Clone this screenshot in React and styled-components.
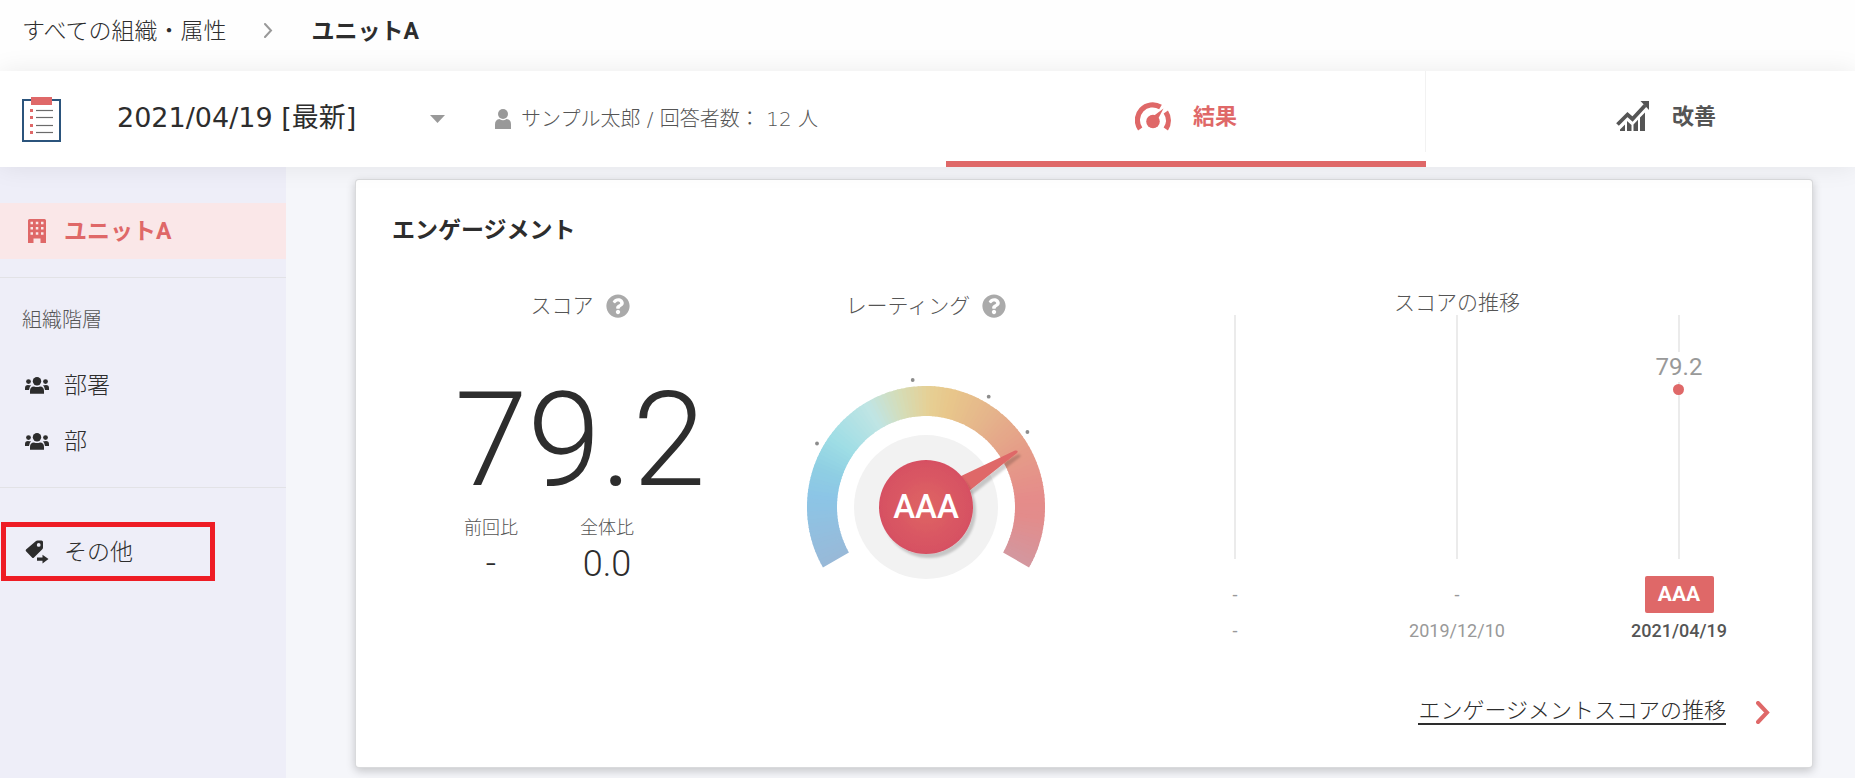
import styled, { createGlobalStyle } from 'styled-components'
import { FaQuestionCircle } from 'react-icons/fa'

const GlobalStyle = createGlobalStyle`
  * { box-sizing: border-box; }
  body {
    margin: 0;
    background: #f5f6fa;
    color: #2d2d2d;
    font-family: 'DejaVu Sans', 'Noto Sans CJK JP', sans-serif;
    font-weight: 300;
  }
  h2, h3, p, ul, ol, dl, dd { margin: 0; padding: 0; }
  ul, ol { list-style: none; }
  svg { display: block; flex-shrink: 0; }
`

const RED = '#df6868'

// stops run clockwise, in degrees from the top
const GAUGE_STOPS = [
  [-120, [152, 185, 216]],
  [-105, [147, 190, 222]],
  [-85, [140, 197, 230]],
  [-70, [143, 207, 227]],
  [-55, [158, 221, 229]],
  [-30, [192, 229, 228]],
  [-12, [215, 219, 178]],
  [2, [230, 207, 148]],
  [12, [232, 199, 139]],
  [35, [229, 180, 139]],
  [60, [229, 156, 136]],
  [85, [229, 140, 138]],
  [95, [227, 140, 139]],
  [120, [211, 151, 159]],
]

const gaugeColor = (deg) => {
  const next = Math.max(1, GAUGE_STOPS.findIndex(([d]) => d >= deg))
  const [d0, c0] = GAUGE_STOPS[next - 1]
  const [d1, c1] = GAUGE_STOPS[next]
  const t = (deg - d0) / (d1 - d0)
  return `rgb(${c0.map((c, i) => Math.round(c + (c1[i] - c) * t)).join(',')})`
}

// the ring is slightly taller than it is wide
const polar = (rx, ry, deg) => {
  const a = (deg * Math.PI) / 180
  return `${(Math.sin(a) * rx).toFixed(2)} ${(-Math.cos(a) * ry).toFixed(2)}`
}

const ringPart = (from, to) =>
  `M${polar(119, 121, from)}A119 121 0 0 1 ${polar(119, 121, to)}L${polar(89, 91, to)}A89 91 0 0 0 ${polar(89, 91, from)}Z`

const Gauge = ({ rating }) => {
  const parts = []
  for (let d = -120; d < 120; d += 2) parts.push(d)
  return (
    <svg width="242" height="206" viewBox="-121 -130 242 206" role="img" aria-label={rating}>
      <defs>
        <radialGradient id="knob">
          <stop offset="0" stopColor="#df6565" />
          <stop offset="1" stopColor="#d65062" />
        </radialGradient>
        <filter id="drop" x="-20%" y="-20%" width="150%" height="150%">
          <feDropShadow dx="3" dy="4" stdDeviation="1" floodColor="#000" floodOpacity="0.18" />
        </filter>
      </defs>
      {parts.map((d) => (
        <path key={d} d={ringPart(d, Math.min(120, d + 2.5))} fill={gaugeColor(d + 1)} />
      ))}
      <circle r="72" fill="#f2f2f2" />
      <g fill="#8c8c8c">
        <circle cx="-109" cy="-63.5" r="1.9" />
        <circle cx="-13.3" cy="-127" r="1.9" />
        <circle cx="62.7" cy="-110.3" r="1.9" />
        <circle cx="101.4" cy="-75" r="1.9" />
      </g>
      <path d="M33 -30L89 -56.5Q93 -57 91 -54L43 -16Z" fill={RED} filter="url(#drop)" />
      <circle r="47" fill="url(#knob)" filter="url(#drop)" />
      <text y="11" textAnchor="middle" fill="#fff" fontFamily="Roboto, sans-serif" fontWeight="500" fontSize="33">
        {rating}
      </text>
    </svg>
  )
}

const ClipboardIcon = () => (
  <svg width="39" height="45" viewBox="0 0 39 45">
    <rect x="1" y="3" width="37" height="41" fill="#fff" stroke="#2b547c" strokeWidth="2" />
    <rect x="9" y="0" width="21" height="8" fill={RED} />
    {[12, 19, 27, 34].map((y) => (
      <g key={y}>
        <rect x="8" y={y} width="3" height="3" fill={RED} />
        <path d={`M14 ${y + 1.5}h17`} stroke="#6b6b6b" strokeWidth="1.2" />
      </g>
    ))}
  </svg>
)

const PersonIcon = () => (
  <svg width="16" height="20" viewBox="0 0 16 20" fill="#999">
    <circle cx="8" cy="5" r="5" />
    <path d="M0 20V15.500Q0 10.500 4.500 10Q8 12.500 11.500 10Q16 10.500 16 15.500V20Z" />
  </svg>
)

const MeterIcon = () => (
  <svg width="36" height="29" viewBox="0 0 36 29">
    <g fill="none" stroke="currentColor" strokeWidth="5.200">
      <path d="M5.200 27A15.300 15.300 0 0 1 25.500 5" />
      <path d="M30.800 10A15.300 15.300 0 0 1 30.800 27" />
    </g>
    <circle cx="18" cy="19.500" r="6.800" fill="currentColor" />
    <path d="M18.500 14L28.500 6.500L23 17Z" fill="currentColor" />
  </svg>
)

const GrowthIcon = () => (
  <svg width="34" height="30" viewBox="0 0 34 30" fill="currentColor">
    <path d="M1.500 23.500L11.500 13.500L16.500 18L29 4.500" fill="none" stroke="currentColor" strokeWidth="3.800" />
    <path d="M24.500 0H33V9Z" />
    <path d="M4 30V28.500L9 23.500V30ZM11 30V20L15.500 24V30ZM17.500 30V23.500L22 18.800V30ZM24 30V16.500L29 11.500V30Z" />
  </svg>
)

const BuildingIcon = () => (
  <svg width="18" height="24" viewBox="0 0 18 24" fill="currentColor" fillRule="evenodd">
    <path d="M1.500 0H16.500Q18 0 18 1.500V24H12.500V19.500H5.500V24H0V1.500Q0 0 1.500 0ZM2.500 2.700V5.200H5V2.700ZM7.800 2.700V5.200H10.300V2.700ZM13 2.700V5.200H15.500V2.700ZM2.500 8V10.500H5V8ZM7.800 8V10.500H10.300V8ZM13 8V10.500H15.500V8ZM2.500 13.200V15.700H5V13.200ZM7.800 13.200V15.700H10.300V13.200ZM13 13.200V15.700H15.500V13.200Z" />
  </svg>
)

const GroupIcon = () => (
  <svg width="24" height="17" viewBox="0 0 24 17" fill="currentColor">
    <circle cx="12" cy="4.300" r="4.200" />
    <circle cx="3.500" cy="4.600" r="2.400" />
    <circle cx="20.500" cy="4.600" r="2.400" />
    <path d="M5 16.800V14Q5 9.800 9 9.600Q12 10.600 15 9.600Q19 9.800 19 14V16.800Z" />
    <path d="M0 13V11Q0 8 3 8Q5 8.500 6 8.200Q4.200 10 4 13Z" />
    <path d="M24 13V11Q24 8 21 8Q19 8.500 18 8.200Q19.800 10 20 13Z" />
  </svg>
)

const TagIcon = () => (
  <svg width="24" height="24" viewBox="0 0 24 24" fill="currentColor" fillRule="evenodd">
    <path d="M11 1Q11.500 .5 12.500 .5H16.500Q18 .5 18 2V7.500Q18 8.500 17.300 9.200L9 17.500Q8 18.500 7 17.500L1 11.300Q.3 10.500 1 9.600ZM13.700 3A1.900 1.900 0 1 0 13.700 6.800A1.900 1.900 0 1 0 13.700 3Z" />
    <path d="M12 17.500H17.500V14.800L23.500 19L17.500 23.500V20.800H12Z" />
  </svg>
)

const Chevron = ({ width, height, stroke, color }) => (
  <svg width={width} height={height} viewBox={`0 0 ${width} ${height}`}>
    <path
      d={`M${stroke / 2} ${stroke / 2}L${width - stroke / 2 - 1} ${height / 2}L${stroke / 2} ${height - stroke / 2}`}
      fill="none"
      stroke={color}
      strokeWidth={stroke}
      strokeLinecap="round"
    />
  </svg>
)

const history = [
  { date: '-', rating: '-' },
  { date: '2019/12/10', rating: '-' },
  { date: '2021/04/19', rating: 'AAA', score: '79.2', current: true },
]

const App = () => {
  return (
    <Page>
      <GlobalStyle />
      <Breadcrumb aria-label="breadcrumb">
        <Crumb href="#all">すべての組織・属性</Crumb>
        <Chevron width={9} height={15} stroke={2} color="#999" />
        <Crumb href="#unit" aria-current="page" $current>ユニットA</Crumb>
      </Breadcrumb>

      <Toolbar>
        <Survey>
          <ClipboardIcon />
          <SelectBox>
            <Select aria-label="2021/04/19 [最新]">
              <option>2021/04/19 [最新]</option>
            </Select>
            <svg width="15" height="8" viewBox="0 0 15 8"><path d="M0 0H15L7.500 8Z" fill="#999" /></svg>
          </SelectBox>
          <Respondents>
            <PersonIcon />
            <Label>サンプル太郎 / 回答者数： 12 人</Label>
          </Respondents>
        </Survey>
        <Tab type="button" $active><MeterIcon /><Label>結果</Label></Tab>
        <Tab type="button"><GrowthIcon /><Label>改善</Label></Tab>
      </Toolbar>

      <Body>
        <Sidebar>
          <NavGroup>
            <NavItem href="#unit" $active><BuildingIcon /><Label>ユニットA</Label></NavItem>
          </NavGroup>
          <NavGroup>
            <NavTitle>組織階層</NavTitle>
            <NavItem href="#section"><GroupIcon /><Label>部署</Label></NavItem>
            <NavItem href="#department"><GroupIcon /><Label>部</Label></NavItem>
          </NavGroup>
          <NavGroup>
            <NavItem href="#others" $marked><TagIcon /><Label>その他</Label></NavItem>
          </NavGroup>
        </Sidebar>

        <Main>
          <Card>
            <CardTitle>エンゲージメント</CardTitle>
            <Panels>
              <Panel>
                <PanelTitle>スコア<HelpIcon /></PanelTitle>
                <Score>79.2</Score>
                <Comparisons>
                  <Comparison><dt>前回比</dt><dd>-</dd></Comparison>
                  <Comparison><dt>全体比</dt><dd>0.0</dd></Comparison>
                </Comparisons>
              </Panel>
              <Panel>
                <PanelTitle>レーティング<HelpIcon /></PanelTitle>
                <GaugeBox><Gauge rating="AAA" /></GaugeBox>
              </Panel>
              <TrendPanel>
                <TrendTitle>スコアの推移</TrendTitle>
                <Trend>
                  {history.map(({ date, rating, score, current }) => (
                    <TrendItem key={date}>
                      <Track>
                        {score && <Point><PointScore>{score}</PointScore><Dot /></Point>}
                      </Track>
                      <RatingSlot>{current ? <Badge>{rating}</Badge> : rating}</RatingSlot>
                      <TrendDate $current={current}>{date}</TrendDate>
                    </TrendItem>
                  ))}
                </Trend>
              </TrendPanel>
            </Panels>
            <More>
              <MoreLink href="#history">エンゲージメントスコアの推移</MoreLink>
              <Chevron width={14} height={23} stroke={4} color={RED} />
            </More>
          </Card>
        </Main>
      </Body>
    </Page>
  )
}

const Page = styled.div`
  display: flex;
  flex-direction: column;
  min-height: 100vh;
`

const Label = styled.span`
  padding-bottom: 4px;
`

const Breadcrumb = styled.nav`
  display: flex;
  align-items: center;
  gap: 38px;
  height: 71px;
  padding: 0 22px 10px;
  background: #fefefe;
`

const Crumb = styled.a`
  padding-bottom: 4px;
  color: #2d2d2d;
  font-size: 23px;
  font-weight: ${({ $current }) => ($current ? 700 : 300)};
  font-family: Roboto, 'Noto Sans CJK JP', sans-serif;
  text-decoration: none;
`

const Toolbar = styled.header`
  position: relative;
  z-index: 1;
  display: grid;
  grid-template-columns: 51% 480px 480px;
  height: 96px;
  background: #fff;
  box-shadow: 0 0 24px rgba(0, 0, 0, 0.08);
  clip-path: inset(-24px 0);
`

const Survey = styled.div`
  display: flex;
  align-items: center;
  padding: 0 22px;
  white-space: nowrap;
`

const SelectBox = styled.div`
  display: grid;
  grid-template-columns: 1fr 15px;
  align-items: center;
  width: 328px;
  margin: 0 50px 0 56px;

  select { grid-area: 1 / 1 / 2 / 3; }
  svg { grid-area: 1 / 2; pointer-events: none; }
`

const Select = styled.select`
  appearance: none;
  border: 0;
  padding: 0 0 4px;
  background: transparent;
  color: #2d2d2d;
  font: inherit;
  font-size: 27px;
  font-weight: 400;
`

const Respondents = styled.p`
  display: flex;
  align-items: center;
  gap: 10px;
  color: #555;
  font-size: 20px;
`

const Tab = styled.button`
  display: flex;
  align-items: center;
  justify-content: center;
  gap: 22px;
  border: 0;
  border-bottom: 6px solid ${({ $active }) => ($active ? RED : 'transparent')};
  padding: 0;
  background: ${({ $active }) =>
    $active ? 'linear-gradient(#f2f2f2, #f2f2f2) right top / 1px 81px no-repeat' : 'none'};
  color: ${({ $active }) => ($active ? RED : '#555')};
  font-family: 'Noto Sans CJK JP', sans-serif;
  font-size: 22px;
  font-weight: 700;
`

const Body = styled.div`
  display: flex;
  flex: 1;
`

const Sidebar = styled.nav`
  flex: 0 0 286px;
  padding-top: 7px;
  background: #eeeef8;
`

const NavGroup = styled.div`
  padding: 29px 0 18px;

  & + & {
    border-top: 1px solid #e2e2e6;
    padding-top: 36px;
  }
`

const NavTitle = styled.h3`
  margin-top: -10px;
  padding: 0 22px 21px;
  color: #555;
  font-size: 20px;
  font-weight: 300;
  line-height: 32px;
`

const NavItem = styled.a`
  position: relative;
  display: grid;
  grid-template-columns: 24px 1fr;
  align-items: center;
  justify-items: start;
  gap: 15px;
  height: 56px;
  padding-left: 25px;
  background: ${({ $active }) => ($active ? '#fae7e8' : 'none')};
  color: ${({ $active }) => ($active ? RED : '#2d2d2d')};
  font-family: Roboto, 'Noto Sans CJK JP', sans-serif;
  font-size: 23px;
  font-weight: ${({ $active }) => ($active ? 700 : 300)};
  text-decoration: none;

  svg { justify-self: center; }

  ${({ $marked }) => $marked && `
    &::after {
      content: '';
      position: absolute;
      inset: -2px 71px -1px 1px;
      border: 5px solid #ee1c25;
    }
  `}
`

const Main = styled.main`
  flex: 1;
  min-width: 0;
  padding: 13px 43px 11px 70px;
`

const Card = styled.section`
  border-radius: 3px;
  padding: 32px 0 42px;
  background: #fff;
  box-shadow: 0 0 0 1px #d9dadc, 0 3px 10px 1px rgba(0, 0, 0, 0.2);
`

const CardTitle = styled.h2`
  padding: 0 36px;
  font-size: 23px;
  font-weight: 700;
  line-height: 36px;
`

const Panels = styled.div`
  display: grid;
  grid-template-columns: 346fr 346fr 25fr 666fr;
  padding: 40px 22px 0 51px;
`

const Panel = styled.section`
  display: flex;
  flex-direction: column;
  align-items: center;
`

const PanelTitle = styled.h3`
  display: flex;
  align-items: center;
  gap: 12px;
  color: #555;
  font-size: 21px;
  font-weight: 300;
  line-height: 36px;
`

const HelpIcon = styled(FaQuestionCircle)`
  color: #aaa;
  font-size: 24px;
`

const Score = styled.p`
  padding-top: 50px;
  font-family: Roboto, sans-serif;
  font-size: 132px;
  font-weight: 300;
  line-height: 132px;
`

const Comparisons = styled.dl`
  display: grid;
  grid-template-columns: 116px 116px;
  padding: 8px 62px 0 0;
`

const Comparison = styled.div`
  text-align: center;

  dt {
    color: #555;
    font-size: 18px;
    line-height: 28px;
  }
  dd {
    font-family: Roboto, sans-serif;
    font-size: 36px;
    line-height: 44px;
  }
`

const GaugeBox = styled.div`
  padding-top: 53px;
`

const TrendPanel = styled.section`
  grid-column: 4;
  text-align: center;
`

const TrendTitle = styled.h3`
  padding-top: 4px;
  color: #555;
  font-size: 21px;
  font-weight: 300;
  line-height: 23px;
`

const Trend = styled.ol`
  display: grid;
  grid-template-columns: repeat(3, 1fr);
  font-family: Roboto, sans-serif;
`

const TrendItem = styled.li`
  display: flex;
  flex-direction: column;
  align-items: center;
  color: #999;
  font-size: 18px;
  font-weight: 400;
`

const Track = styled.div`
  display: flex;
  justify-content: center;
  width: 48px;
  height: 244px;
  background: linear-gradient(#ebebeb, #ebebeb) center / 2px 100% no-repeat;
`

const Point = styled.div`
  display: flex;
  flex-direction: column;
  align-items: center;
  gap: 2px;
  padding-top: 37px;
`

const PointScore = styled.span`
  background: #fff;
  font-size: 24px;
  line-height: 30px;
`

const Dot = styled.span`
  width: 11px;
  height: 11px;
  border-radius: 50%;
  background: ${RED};
`

const RatingSlot = styled.div`
  display: flex;
  align-items: center;
  height: 37px;
  margin: 17px 0 6px;
`

const Badge = styled.span`
  width: 69px;
  border-radius: 2px;
  background: ${RED};
  color: #fff;
  font-size: 21px;
  font-weight: 700;
  line-height: 37px;
`

const TrendDate = styled.p`
  color: ${({ $current }) => ($current ? '#555' : '#999')};
  font-weight: ${({ $current }) => ($current ? 500 : 400)};
  line-height: 24px;
`

const More = styled.div`
  display: flex;
  align-items: center;
  justify-content: flex-end;
  gap: 30px;
  padding: 56px 42px 0 0;
`

const MoreLink = styled.a`
  border-bottom: 2px solid #2d2d2d;
  color: #2d2d2d;
  font-size: 22px;
  line-height: 24px;
  text-decoration: none;
`

export default App
